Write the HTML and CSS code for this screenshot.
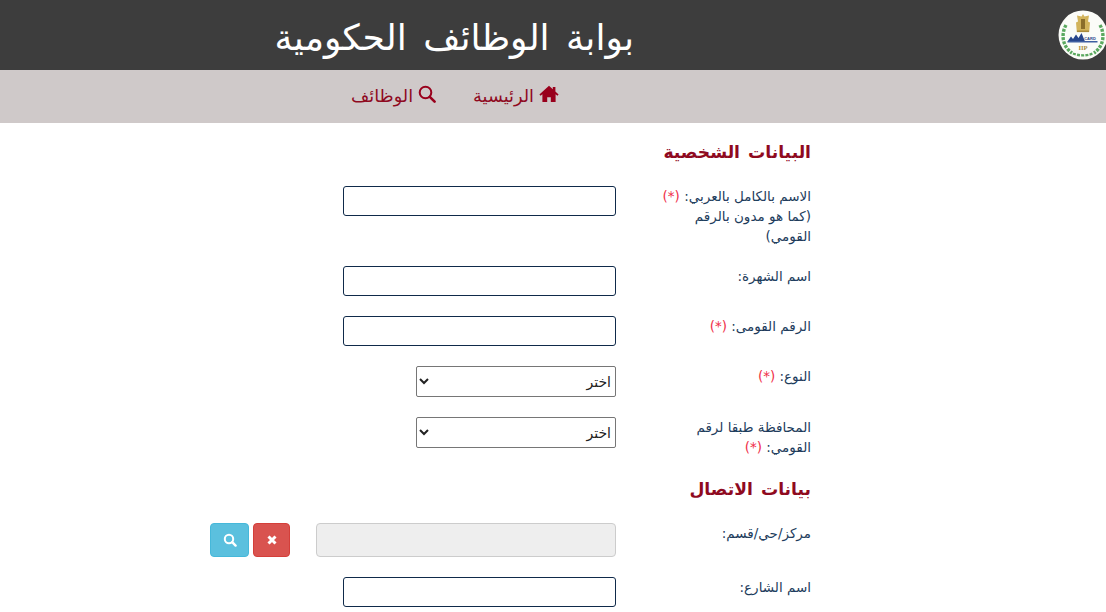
FILE: index.html
```html
<!DOCTYPE html>
<html lang="ar" dir="rtl">
<head>
<meta charset="utf-8">
<title>بوابة الوظائف الحكومية</title>
<link rel="stylesheet" href="styles.css">
</head>
<body>
<header class="topbar">
  <div class="logo">
    <svg viewBox="0 0 50 50" width="50" height="50">
      <circle cx="25" cy="25" r="24.5" fill="#fbfcf8"/>
      <path d="M25 4l1.500 2.500 4.500-1-1 6 2 1-.8 9.500h-12.400l-.8-9.500 2-1-1-6 4.500 1z" fill="#d2b45c"/>
      <path d="M23 9h4v10h-4z" fill="#8a6d2a"/>
      <path d="M19 20.500h12v1.600h-12z" fill="#a88a3c"/>
      <path d="M9.500 31.500l3.500-5 2 2.500 3-4.500 2.500 3.500 3-5 3.500 8.500z" fill="#27468c"/>
      <rect x="9.500" y="31" width="30" height="1.500" fill="#3e5ea0"/>
      <text class="logo-card" x="32" y="29.500" text-anchor="middle" direction="ltr">CARD</text>
      <text class="logo-iip" x="25" y="40" text-anchor="middle" direction="ltr">IIP</text>
      <path d="M8 15c-5 9-4 21 6 28" fill="none" stroke="#5aa85f" stroke-width="3.400" stroke-dasharray="3 1.200"/>
      <path d="M42 15c5 9 4 21-6 28" fill="none" stroke="#5aa85f" stroke-width="3.400" stroke-dasharray="3 1.200"/>
      <path d="M15 43.500c6 2.500 14 2.500 20 0" fill="none" stroke="#5aa85f" stroke-width="2.400" stroke-dasharray="3 1.200"/>
    </svg>
  </div>
  <h1 class="site-title">بوابة الوظائف الحكومية</h1>
</header>
<nav class="navbar">
  <a class="nav-link" href="#">
    <svg class="nav-icon" viewBox="0 0 20 18" width="20" height="18"><path d="M10 .8L.4 9.400l1.200 1.400 1.800-1.500V17h4.800v-4.800h3.600V17h4.800V9.300l1.800 1.500 1.200-1.400-3.200-2.900V2h-2.600v2.200z" fill="#99001c"/></svg>
    <span>الرئيسية</span>
  </a>
  <a class="nav-link" href="#">
    <svg class="nav-icon" viewBox="0 0 18 18" width="18" height="18"><circle cx="7.500" cy="7.500" r="5.800" fill="none" stroke="#99001c" stroke-width="2"/><path d="M11.800 11.800l4.800 4.800" stroke="#99001c" stroke-width="2.600" stroke-linecap="round"/></svg>
    <span>الوظائف</span>
  </a>
</nav>
<main class="form">
  <h2 class="section first">البيانات الشخصية</h2>
  <div class="row">
    <label class="label">الاسم بالكامل بالعربي: <span class="req">(*)</span> (كما هو مدون بالرقم القومي)</label>
    <input class="field" type="text">
  </div>
  <div class="row">
    <label class="label">اسم الشهرة:</label>
    <input class="field" type="text">
  </div>
  <div class="row">
    <label class="label">الرقم القومى: <span class="req">(*)</span></label>
    <input class="field" type="text">
  </div>
  <div class="row">
    <label class="label">النوع: <span class="req">(*)</span></label>
    <select class="choice"><option>اختر</option></select>
  </div>
  <div class="row">
    <label class="label">المحافظة طبقا لرقم القومي: <span class="req">(*)</span></label>
    <select class="choice"><option>اختر</option></select>
  </div>
  <h2 class="section">بيانات الاتصال</h2>
  <div class="row">
    <label class="label">مركز/حي/قسم:</label>
    <input class="field locked" type="text" disabled>
    <div class="actions">
      <button class="btn danger" type="button"><svg viewBox="0 0 12 12" width="12" height="12"><path d="M2.500 2.500l7 7M9.500 2.500l-7 7" stroke="#fff" stroke-width="3"/></svg></button>
      <button class="btn info" type="button"><svg viewBox="0 0 14 14" width="14" height="14"><circle cx="6" cy="6" r="4.200" fill="none" stroke="#fff" stroke-width="2"/><path d="M9.200 9.200l3.400 3.400" stroke="#fff" stroke-width="2.400" stroke-linecap="round"/></svg></button>
    </div>
  </div>
  <div class="row">
    <label class="label">اسم الشارع:</label>
    <input class="field" type="text">
  </div>
</main>
</body>
</html>
```
FILE: styles.css
```css
* { box-sizing: border-box; }
html, body { margin: 0; padding: 0; height: 612px; overflow: hidden; background: #fff; }
body { font-family: "DejaVu Sans", "Noto Sans", sans-serif; font-size: 13.5px; line-height: 20px; color: #1d3c5c; }
.topbar { height: 70px; background: #3d3d3d; display: flex; align-items: center; }
.logo { width: 50px; height: 50px; margin-right: -2px; flex: none; }
.logo-card { font-family: "Liberation Sans", sans-serif; font-size: 4px; font-weight: 700; fill: #27468c; }
.logo-iip { font-family: "Liberation Serif", serif; font-size: 6.500px; font-weight: 700; fill: #a58a3c; }
.site-title { margin: 6px 424px 0 0; font-size: 36px; line-height: 60px; font-weight: 400; word-spacing: 5px; color: #fff; white-space: nowrap; }
.navbar { height: 53px; background: #cfc9c9; display: flex; align-items: center; gap: 37px; padding-right: 547px; }
.nav-link { display: flex; align-items: center; gap: 5px; color: #8f0a1f; text-decoration: none; font-size: 17.700px; line-height: 24px; margin-top: -1px; }
.nav-icon { flex: none; margin-top: -4px; }
.form { padding-right: 295px; }
.section { margin: -1px 0 21px; font-size: 17.200px; line-height: 26px; font-weight: 700; word-spacing: 2px; color: #8f0a1f; }
.section.first { margin-top: 16px; margin-bottom: 21px; }
.row { display: flex; align-items: flex-start; margin-bottom: 20px; }
.label { width: 155px; margin-left: 40px; flex: none; }
.req { color: #f0304a; }
.field { width: 273px; height: 30px; border: 1px solid #0f2a4a; border-radius: 3px; background: #fff; }
.field.locked { width: 300px; height: 34px; border: 1px solid #ccc; border-radius: 4px; background: #eee; }
.choice { width: 200px; height: 31px; font-family: inherit; font-size: 14px; border: 1px solid #767676; border-radius: 2px; background: #fff; color: #222; padding: 0; }
.actions { display: flex; gap: 4px; margin-right: 26px; }
.btn { height: 34px; border-radius: 4px; border: 1px solid; display: flex; align-items: center; justify-content: center; padding: 0; }
.btn.danger { width: 37px; background: #d9534f; border-color: #d43f3a; }
.btn.info { width: 39px; background: #5bc0de; border-color: #46b8da; }
```
